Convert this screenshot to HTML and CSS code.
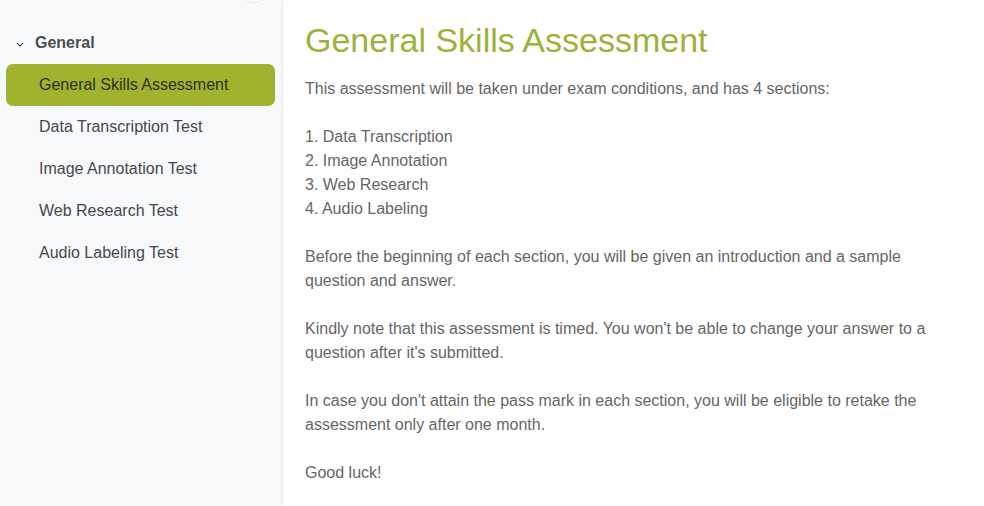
FILE: index.html
```html
<!DOCTYPE html>
<html lang="en">
<head>
<meta charset="utf-8">
<title>General Skills Assessment</title>
<link rel="stylesheet" href="styles.css">
</head>
<body>
<div class="layout">
  <aside class="sidebar">
    <button class="collapse-btn" aria-label="Collapse"></button>
    <nav class="nav">
      <div class="group-header">
        <svg class="chevron" width="8" height="5" viewBox="0 0 8 5"><path d="M0.8 0.8 L4 4 L7.2 0.8" fill="none" stroke="#4a4f55" stroke-width="1.2"/></svg>
        <span>General</span>
      </div>
      <ul class="items">
        <li class="item active">General Skills Assessment</li>
        <li class="item">Data Transcription Test</li>
        <li class="item">Image Annotation Test</li>
        <li class="item">Web Research Test</li>
        <li class="item">Audio Labeling Test</li>
      </ul>
    </nav>
  </aside>
  <main class="content">
    <h1 class="title">General Skills Assessment</h1>
    <p>This assessment will be taken under exam conditions, and has 4 sections:</p>
    <p>1. Data Transcription<br>2. Image Annotation<br>3. Web Research<br>4. Audio Labeling</p>
    <p>Before the beginning of each section, you will be given an introduction and a sample question and answer.</p>
    <p>Kindly note that this assessment is timed. You won't be able to change your answer to a question after it's submitted.</p>
    <p>In case you don't attain the pass mark in each section, you will be eligible to retake the assessment only after one month.</p>
    <p>Good luck!</p>
  </main>
</div>
</body>
</html>
```
FILE: styles.css
```css
* { box-sizing: border-box; }
html, body {
  margin: 0;
  padding: 0;
  height: 100%;
  background: #fff;
  font-family: "Liberation Sans", Arial, sans-serif;
}
.layout {
  display: flex;
  height: 506px;
  overflow: hidden;
}
.sidebar {
  position: relative;
  flex: 0 0 281px;
  background: #f8f9fb;
  box-shadow: 1px 0 4px rgba(0,0,0,0.12);
  z-index: 1;
  padding: 22px 6px 0 6px;
}
.collapse-btn {
  position: absolute;
  left: 240px;
  top: -25px;
  width: 28px;
  height: 28px;
  border-radius: 50%;
  border: 1px solid #e4e6ea;
  background: #fff;
  padding: 0;
}
.group-header {
  display: flex;
  align-items: center;
  height: 42px;
  padding-left: 11px;
  gap: 11px;
  font-size: 16px;
  font-weight: bold;
  color: #4a4f55;
}
.chevron { margin-top: 3px; margin-left: -1px; }
.items {
  list-style: none;
  margin: 0;
  padding: 0;
}
.item {
  height: 42px;
  display: flex;
  align-items: center;
  padding-left: 33px;
  font-size: 16px;
  color: #43484e;
  border-radius: 7px;
}
.item.active {
  background: #a1b22e;
  color: #2c3117;
}
.content {
  flex: 1;
  padding: 20px 24px 0 24px;
  color: #666;
  font-size: 16px;
  line-height: 24px;
}
.title {
  margin: 0 0 16px 0;
  font-size: 34px;
  line-height: 41px;
  font-weight: normal;
  color: #9bb23b;
}
.content p {
  margin: 0 0 24px 0;
}
```
